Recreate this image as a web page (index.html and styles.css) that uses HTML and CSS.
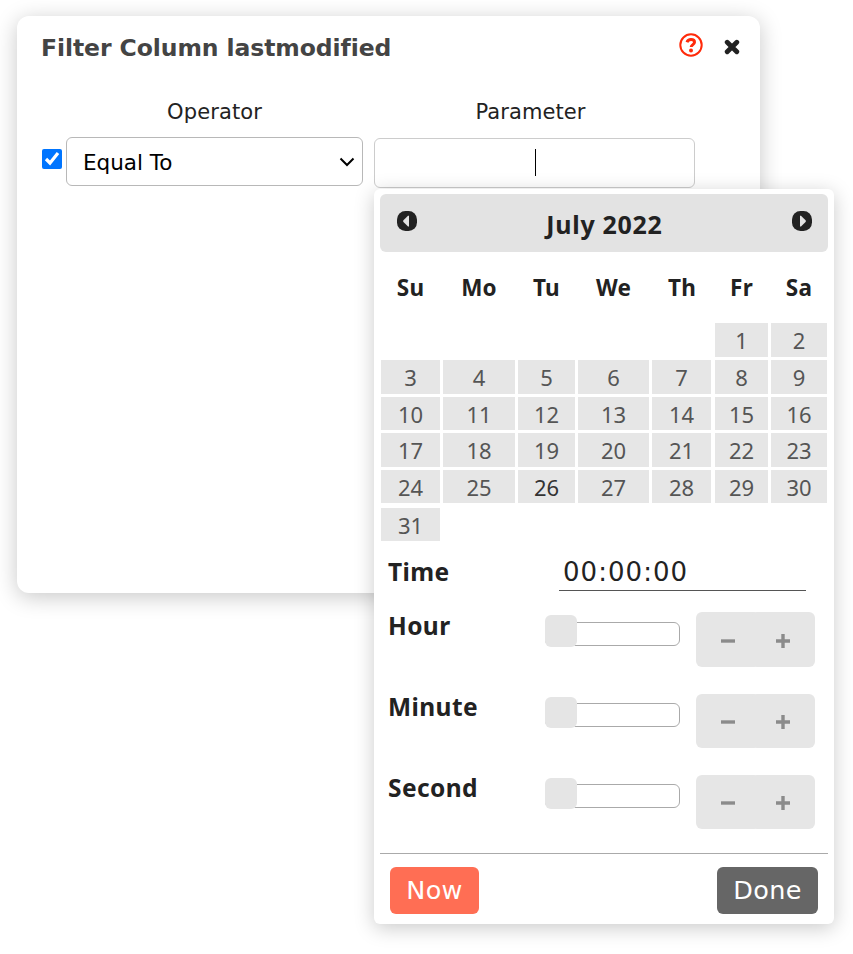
FILE: index.html
```html
<!DOCTYPE html>
<html lang="en">
<head>
  <meta charset="UTF-8" />
  <title>Filter Column lastmodified</title>
  <link rel="stylesheet" href="styles.css">
</head>
<body>

  <div class="dialog">
    <div class="dialog-header">
      <h1>Filter Column lastmodified</h1>
      <svg class="help" viewBox="0 0 24 24">
        <circle cx="12" cy="12" r="10.7" fill="none" stroke="#ff2a0a" stroke-width="2"/>
        <path d="M8 9.200C8.700 7.200 10.300 6.600 12 6.600c2.300 0 3.500 1 3.500 2.700 0 2.300-3.200 2.300-3.300 4.700" fill="none" stroke="#ff2a0a" stroke-width="3"/>
        <circle cx="12" cy="17.500" r="2" fill="#ff2a0a"/>
      </svg>
      <svg class="close" viewBox="0 0 16 16">
        <path d="M3.200 3.200l9.600 9.600M12.800 3.200L3.200 12.800" stroke="#222" stroke-width="4.800" stroke-linecap="round"/>
      </svg>
    </div>

    <div class="filter">
      <span></span>
      <label class="caption">Operator</label>
      <label class="caption">Parameter</label>

      <input type="checkbox" class="check" checked>
      <div class="select">
        <span>Equal To</span>
        <svg viewBox="0 0 16 10"><path d="M1.500 1.500L8 8l6.500-6.500" fill="none" stroke="#000" stroke-width="2"/></svg>
      </div>
      <div class="field"><span class="caret"></span></div>
    </div>
  </div>

  <div class="picker">
    <div class="month">
      <svg viewBox="0 0 20 20"><rect width="20" height="20" rx="8.500" fill="#222"/><path d="M12 4.800v10.700h-1L6.200 10.700V9.500L11 4.800z" fill="#e3e3e3"/></svg>
      <span class="month-name">July 2022</span>
      <svg viewBox="0 0 20 20"><rect width="20" height="20" rx="8.500" fill="#222"/><path d="M8 4.800v10.700h1L13.800 10.700V9.500L9 4.800z" fill="#e3e3e3"/></svg>
    </div>

    <div class="weekdays">
      <b>Su</b><b>Mo</b><b>Tu</b><b>We</b><b>Th</b><b>Fr</b><b>Sa</b>
    </div>

    <div class="days">
      <a class="first">1</a><a>2</a>
      <a>3</a><a>4</a><a>5</a><a>6</a><a>7</a><a>8</a><a>9</a>
      <a>10</a><a>11</a><a>12</a><a>13</a><a>14</a><a>15</a><a>16</a>
      <a>17</a><a>18</a><a>19</a><a>20</a><a>21</a><a>22</a><a>23</a>
      <a>24</a><a>25</a><a class="today">26</a><a>27</a><a>28</a><a>29</a><a>30</a>
      <a class="last">31</a>
    </div>

    <div class="time">
      <b>Time</b>
      <div class="time-value">00:00:00</div>
    </div>

    <div class="unit hour">
      <b>Hour</b>
      <div class="slider"><i></i></div>
      <div class="stepper">
        <span><svg viewBox="0 0 14 14"><path d="M0 7h14" stroke="#8b8b8b" stroke-width="3.400"/></svg></span>
        <span><svg viewBox="0 0 14 14"><path d="M0 7h14M7 0v14" stroke="#8b8b8b" stroke-width="3.400"/></svg></span>
      </div>
    </div>
    <div class="unit">
      <b>Minute</b>
      <div class="slider"><i></i></div>
      <div class="stepper">
        <span><svg viewBox="0 0 14 14"><path d="M0 7h14" stroke="#8b8b8b" stroke-width="3.400"/></svg></span>
        <span><svg viewBox="0 0 14 14"><path d="M0 7h14M7 0v14" stroke="#8b8b8b" stroke-width="3.400"/></svg></span>
      </div>
    </div>
    <div class="unit">
      <b>Second</b>
      <div class="slider"><i></i></div>
      <div class="stepper">
        <span><svg viewBox="0 0 14 14"><path d="M0 7h14" stroke="#8b8b8b" stroke-width="3.400"/></svg></span>
        <span><svg viewBox="0 0 14 14"><path d="M0 7h14M7 0v14" stroke="#8b8b8b" stroke-width="3.400"/></svg></span>
      </div>
    </div>

    <div class="actions">
      <button class="now">Now</button>
      <button class="done">Done</button>
    </div>
  </div>

</body>
</html>
```

FILE: styles.css
```css
* {
  box-sizing: border-box;
}

body {
  margin: 0;
  padding: 16px 0 0 17px;
  height: 954px;
  overflow: hidden;
  background: #fff;
  color: #222;
  font-family: Verdana, "DejaVu Sans", sans-serif;
}

svg {
  display: block;
}

.dialog {
  width: 743px;
  height: 577px;
  padding: 17px 18px 0 25px;
  border-radius: 12px;
  background: #fff;
  box-shadow: 0 4px 22px rgba(0, 0, 0, 0.22);
}

.dialog-header {
  display: flex;
  align-items: flex-start;
  height: 63px;
}

h1 {
  flex: 1;
  margin: 0 0 0 -1px;
  color: #444;
  font-size: 23.5px;
  letter-spacing: -0.08px;
  line-height: 30px;
  white-space: nowrap;
}

.help {
  width: 24px;
  height: 24px;
  margin-right: 20px;
}

.close {
  width: 16px;
  height: 16px;
  margin: 6px 2px 0 1px;
}

.filter {
  display: grid;
  grid-template-columns: 24px 297px 321px;
  grid-template-rows: 41px 51px;
}

.caption {
  font-size: 21px;
  letter-spacing: 0.1px;
  line-height: 32px;
  text-align: center;
}

.filter > :nth-child(3),
.field {
  margin-left: 11px;
  width: 321px;
}

.caption:nth-child(3) {
  padding-right: 8px;
}

.check {
  width: 20px;
  height: 20px;
  margin: 12px 0 0;
}

.select {
  display: flex;
  align-items: center;
  justify-content: space-between;
  height: 49px;
  padding: 0 7px 0 16px;
  border: 1px solid #b8b8b8;
  border-radius: 6px;
  color: #000;
  font-size: 21.5px;
}

.select span {
  padding-top: 2px;
}

.select svg {
  width: 16px;
  height: 10px;
}

.field {
  display: flex;
  align-items: center;
  justify-content: center;
  height: 50px;
  margin-top: 1px;
  padding: 0 0 2px 2px;
  border: 1px solid #ccc;
  border-radius: 6px;
}

.caret {
  width: 1px;
  height: 27px;
  background: #000;
}

/* popup laid over the dialog */
.picker {
  position: absolute;
  left: 374px;
  top: 189px;
  width: 460px;
  height: 735px;
  padding: 5px 6px;
  border-radius: 6px;
  background: #fff;
  box-shadow: 0 4px 20px rgba(0, 0, 0, 0.21);
  font-family: "Segoe UI", "Noto Sans", sans-serif;
}

.month {
  display: flex;
  justify-content: space-between;
  height: 58px;
  padding: 17px 16px 0 17px;
  border-radius: 6px;
  background: #e3e3e3;
  font-size: 25px;
  font-weight: bold;
  letter-spacing: 0.7px;
  line-height: 26px;
}

.month svg {
  width: 20px;
  height: 20px;
}

.weekdays,
.days {
  display: grid;
  grid-template-columns: 59px 72px 57px 71px 60px 53px 56px;
  column-gap: 3px;
  margin: 0 1px;
  text-align: center;
}

.weekdays {
  height: 71px;
  font-size: 22.5px;
  letter-spacing: 0.2px;
  line-height: 72px;
}

.days {
  grid-template-rows: 34px 34px 33px 34px 33px 35px;
  row-gap: 3px;
  color: #555;
  font-size: 22px;
  line-height: 35px;
}

.days a {
  background: #e6e6e6;
}

/* Thursday column */
.days a:nth-child(7n) {
  margin-right: 1px;
}

.first {
  grid-column: 6;
}

.days .today {
  color: #333;
}

.days .last {
  margin-top: 2px;
}

.time {
  display: flex;
  justify-content: space-between;
  height: 50px;
  padding: 0 22px 0 8px;
  font-size: 24.5px;
  letter-spacing: 0.4px;
}

.time b {
  line-height: 62px;
}

.time-value {
  width: 247px;
  padding-left: 4px;
  border-bottom: 1px solid #555;
  font-family: Verdana, "DejaVu Sans", sans-serif;
  font-size: 26px;
  letter-spacing: 1.05px;
  line-height: 62px;
}

.unit {
  display: grid;
  grid-template-columns: 157px 151px 119px;
  height: 81px;
  padding-left: 8px;
  font-size: 24.5px;
  letter-spacing: 0.4px;
}

.unit b {
  line-height: 25px;
}

.unit.hour {
  height: 82px;
  margin-top: 21px;
}

.hour b {
  line-height: 27px;
}

.slider {
  width: 135px;
  height: 24px;
  margin-top: 9px;
  border: 1px solid #aaa;
  border-radius: 6px;
}

.hour .slider {
  margin-top: 10px;
}

.slider i {
  display: block;
  width: 32px;
  height: 31px;
  margin: -7px 0 0 -1px;
  border-radius: 6px;
  background: #e5e5e5;
}

.hour i {
  height: 32px;
  margin-top: -8px;
}

.stepper {
  display: flex;
  height: 54px;
}

.hour .stepper {
  height: 55px;
}

.stepper span {
  display: flex;
  align-items: center;
  justify-content: center;
  width: 64px;
  padding-top: 2px;
  border-radius: 6px;
  background: #e6e6e6;
}

.stepper span + span {
  margin-left: -9px;
}

.hour .stepper span {
  padding-top: 3px;
}

.stepper svg {
  width: 14px;
  height: 14px;
}

.actions {
  display: flex;
  align-items: flex-start;
  justify-content: space-between;
  margin-top: -3px;
  padding: 13px 10px 0;
  border-top: 1px solid #aaa;
}

button {
  height: 47px;
  padding: 0 0 2px;
  border: none;
  border-radius: 6px;
  color: #fff;
  font-family: Verdana, "DejaVu Sans", sans-serif;
  font-size: 25.5px;
  letter-spacing: 0.3px;
}

.now {
  width: 89px;
  background: #ff6e54;
}

.done {
  width: 101px;
  background: #666;
}
```
